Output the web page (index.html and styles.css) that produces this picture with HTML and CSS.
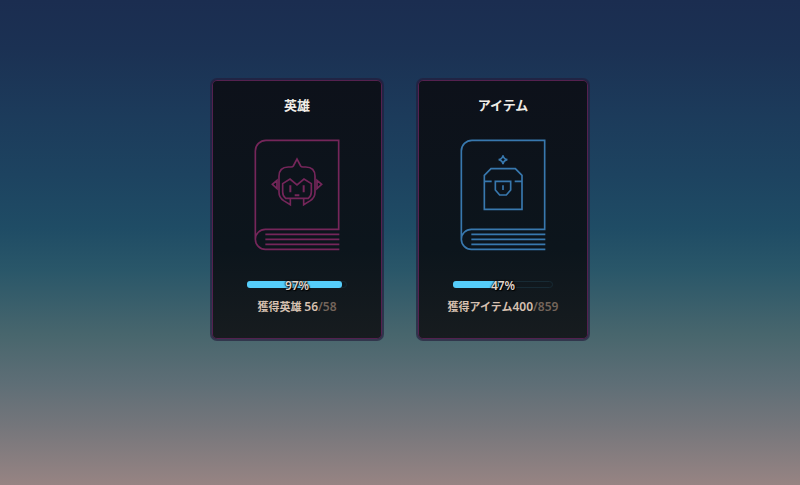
FILE: index.html
```html
<!DOCTYPE html>
<html lang="ja">
<head>
  <meta charset="UTF-8">
  <meta name="viewport" content="width=device-width, initial-scale=1">
  <title>図鑑</title>
  <link rel="stylesheet" href="styles.css">
</head>
<body>
  <main class="collection">
    <a class="card" href="#heroes">
      <h2>英雄</h2>
      <svg class="book book-hero" viewBox="24 27 264 336" aria-hidden="true">
        <!-- book -->
        <path d="M31 328V63a32 32 0 0 1 32-32H281V298H61a30 30 0 0 0 0 60H283"/>
        <path d="M61 313H283M61 328H283M61 343H283"/>
        <!-- hero head -->
        <path d="M136 205V224L116 212Q102 203 102 187V139Q102 111 130 111H138Q143 111 145 108L156 87L167 108Q169 111 174 111H182Q210 111 210 139V187Q210 203 196 212L176 224V205"/>
        <path d="M113 161L135 147L156 165L177 147L199 161V186Q199 198 190 205H122Q113 198 113 186Z"/>
        <path class="face" d="M136 166V187M176 166V187M149 196H163"/>
        <path d="M96 151L82 163L96 176ZM216 151L230 163L216 176Z"/>
      </svg>
      <div class="bar" role="progressbar" aria-label="獲得英雄" aria-valuenow="97">
        <div class="fill" style="width: 97%"></div>
        <span class="percent">97%</span>
      </div>
      <p>獲得英雄 <span class="count">56<span class="total">/58</span></span></p>
    </a>

    <a class="card" href="#items">
      <h2>アイテム</h2>
      <svg class="book book-item" viewBox="27 27 264 336" aria-hidden="true">
        <!-- book -->
        <path d="M34 328V63a32 32 0 0 1 32-32H284V298H64a30 30 0 0 0 0 60H286"/>
        <path d="M64 313H286M64 328H286M64 343H286"/>
        <!-- chest -->
        <path d="M103 238V136L123 116H196L216 136V238ZM103 154H125M194 154H216"/>
        <path d="M136 154H182V180L169 195H149L136 180ZM159 166V180"/>
        <!-- sparkle -->
        <path d="M159 76Q161 87 172 89Q161 91 159 102Q157 91 146 89Q157 87 159 76Z"/>
      </svg>
      <div class="bar" role="progressbar" aria-label="獲得アイテム" aria-valuenow="47">
        <div class="fill" style="width: 47%"></div>
        <span class="percent">47%</span>
      </div>
      <p>獲得アイテム<span class="count">400<span class="total">/859</span></span></p>
    </a>
  </main>
</body>
</html>
```
FILE: styles.css
```css
* {
  box-sizing: border-box;
}
body {
  margin: 0;
  min-height: 100vh;
  font-family: "Noto Sans", "Noto Sans CJK JP", sans-serif;
  background: linear-gradient(
    #1b2d50 0%,
    #1b3153 10%,
    #1c3b5b 24%,
    #1d4360 36%,
    #1f4c65 47%,
    #2a5769 56%,
    #48666d 69%,
    #5e6e76 79%,
    #75767b 88%,
    #978483 100%
  );
}
.collection {
  display: flex;
  flex-wrap: wrap;
  justify-content: center;
  gap: 32px;
  padding: 78px 16px 32px;
}
.card {
  display: flex;
  flex-direction: column;
  align-items: center;
  width: 174px;
  padding: 13px 0 24px;
  border: 2px solid rgba(36, 28, 58, 0.65);
  border-radius: 7px;
  background: linear-gradient(#0d111a, #0c151c 65%, #171c1f) padding-box;
  box-shadow: inset 0 0 0 1px #54214f;
  color: #d6c0b0;
  text-decoration: none;
}
h2 {
  margin: 0;
  font-size: 13px;
  line-height: 24px;
  color: #f0ece6;
}
.book {
  width: 88px;
  height: 112px;
  margin: 22px 0 30px;
  fill: none;
  stroke-width: 5;
}
.book-hero {
  stroke: #75265a;
}
.book-item {
  stroke: #3878ae;
}
.face {
  stroke-width: 6;
}
.bar {
  position: relative;
  width: 100px;
  height: 7px;
  border: 1px solid #172a34;
  border-radius: 4px;
}
.fill {
  height: 7px;
  margin: -1px;
  border-radius: 3px;
  background: #55cdfa;
}
/* the percentage sits over the bar */
.percent {
  position: absolute;
  inset: -4px 0;
  font-size: 12px;
  font-weight: 600;
  line-height: 16px;
  text-align: center;
  color: #e0d6cd;
  text-shadow: 0 0 1px #000, 0 0 2px #000, 1px 1px 1px #000;
}
p {
  margin: 11px 0 0;
  font-size: 11px;
  font-weight: 600;
  line-height: 16px;
}
.count {
  font-size: 12px;
}
.total {
  color: #73645a;
}
```
